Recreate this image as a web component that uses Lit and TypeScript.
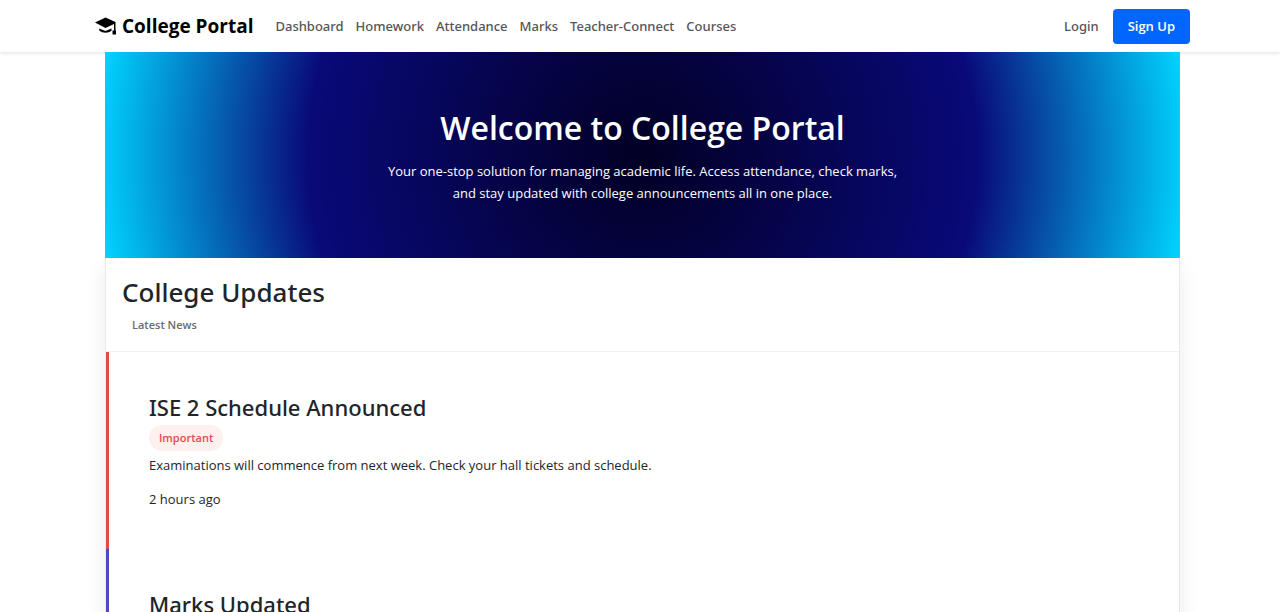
import { LitElement, html, css } from "lit";
import { customElement } from "lit/decorators.js";

interface NewsItem {
  title: string;
  tag?: string;
  text?: string;
  time?: string;
  tone: "important" | "info";
}

const LINKS = ["Dashboard", "Homework", "Attendance", "Marks", "Teacher-Connect", "Courses"];

const NEWS: NewsItem[] = [
  {
    title: "ISE 2 Schedule Announced",
    tag: "Important",
    text: "Examinations will commence from next week. Check your hall tickets and schedule.",
    time: "2 hours ago",
    tone: "important",
  },
  {
    title: "Marks Updated",
    tone: "info",
  },
];

@customElement("app-root")
export class AppRoot extends LitElement {
  static styles = css`
    :host {
      display: block;
      height: 100vh;
      overflow: hidden;
      background: #fff;
      color: #212529;
      font-family: "Open Sans", "Noto Sans", sans-serif;
      font-size: 13px;
      line-height: 22px;
    }
    * {
      box-sizing: border-box;
    }
    h1, h2, h3, p {
      margin: 0;
    }
    .bar {
      display: flex;
      align-items: center;
      height: 52px;
      padding: 0 90px 0 95px;
      background: #fff;
      box-shadow: 0 1px 4px rgba(0, 0, 0, 0.12);
    }
    .brand {
      display: flex;
      align-items: center;
      gap: 6px;
      margin-right: 22px;
      color: #000;
      font-size: 19px;
      font-weight: 700;
      text-decoration: none;
    }
    .cap {
      width: 21px;
      height: 19px;
    }
    .links {
      display: flex;
      flex: 1;
      gap: 12px;
    }
    .link {
      color: #555;
      font-family: "Noto Sans", "Open Sans", sans-serif;
      font-size: 13px;
      font-weight: 500;
      text-decoration: none;
      white-space: nowrap;
    }
    .login {
      margin-right: 14px;
    }
    .signup {
      height: 35px;
      padding: 0 15px;
      border: 0;
      border-radius: 4px;
      background: #0066ff;
      color: #fff;
      font: inherit;
      font-weight: 600;
    }
    .page {
      padding: 0 100px 0 105px;
    }
    .hero {
      position: relative;
      padding: 54px 24px;
      background: radial-gradient(circle, #020024 0%, #090979 61%, #00d4ff 100%);
      color: #fff;
      text-align: center;
    }
    .welcome {
      margin-bottom: 10px;
      font-size: 32px;
      line-height: 44px;
      font-weight: 600;
    }
    .lead {
      max-width: 520px;
      margin: 0 auto;
    }
    .updates {
      border: 1px solid #e9e9ea;
      border-top: 0;
      box-shadow: 0 10px 20px rgba(0, 0, 0, 0.08);
    }
    .heading {
      padding: 16px 16px 12px;
      border-bottom: 1px solid #f0f0f0;
    }
    .title,
    .headline {
      font-family: "Noto Sans", "Open Sans", sans-serif;
      font-weight: 500;
    }
    .title {
      font-size: 26px;
      line-height: 36px;
    }
    .latest {
      padding: 6px 10px 5px;
      color: #6b6b6b;
      font-size: 11px;
      line-height: 18px;
      font-weight: 600;
    }
    .item {
      padding: 40px 40px 39px;
      border-left: 3px solid #4f46c8;
    }
    .item.important {
      border-left-color: #dc4c4c;
    }
    .headline {
      font-size: 22px;
      line-height: 31px;
    }
    .tag {
      display: block;
      width: fit-content;
      margin: 2px 0 3px;
      padding: 4px 10px;
      border-radius: 13px;
      background: #fff0f0;
      color: #dc4c4c;
      font-size: 11px;
      line-height: 18px;
      font-weight: 600;
    }
    .text {
      margin-bottom: 12px;
    }
  `;

  render() {
    return html`
      <header class="bar">
        <a class="brand" href="#">
          <svg class="cap" viewBox="0 0 21 19" aria-hidden="true">
            <path d="M0 5.500 10.500 0.500 20.500 5v8.500h.5v4h-3.500v-4h1.500V7L10.500 11Z" />
            <path d="M4 8.800 10.500 12 16.500 9.200V10.800L14.500 12.200 10.500 13.300 6.500 12.200 4 10.800Z" fill="#fff" />
            <path d="M4 11.500 10.500 14 16.500 11.500v2.200c-3 2.600-9 2.600-12 0Z" />
          </svg>
          College Portal
        </a>
        <nav class="links">
          ${LINKS.map((l) => html`<a class="link" href="#">${l}</a>`)}
        </nav>
        <a class="link login" href="#">Login</a>
        <button class="signup" type="button">Sign Up</button>
      </header>
      <main class="page">
        <section class="hero">
          <h1 class="welcome">Welcome to College Portal</h1>
          <p class="lead">
            Your one-stop solution for managing academic life. Access attendance, check marks, and
            stay updated with college announcements all in one place.
          </p>
        </section>
        <section class="updates">
          <div class="heading">
            <h2 class="title">College Updates</h2>
            <p class="latest">Latest News</p>
          </div>
          ${NEWS.map(
            (n) => html`
              <article class="item ${n.tone}">
                <h3 class="headline">${n.title}</h3>
                ${n.tag ? html`<span class="tag">${n.tag}</span>` : null}
                ${n.text ? html`<p class="text">${n.text}</p>` : null}
                ${n.time ? html`<p class="time">${n.time}</p>` : null}
              </article>
            `
          )}
        </section>
      </main>
    `;
  }
}
